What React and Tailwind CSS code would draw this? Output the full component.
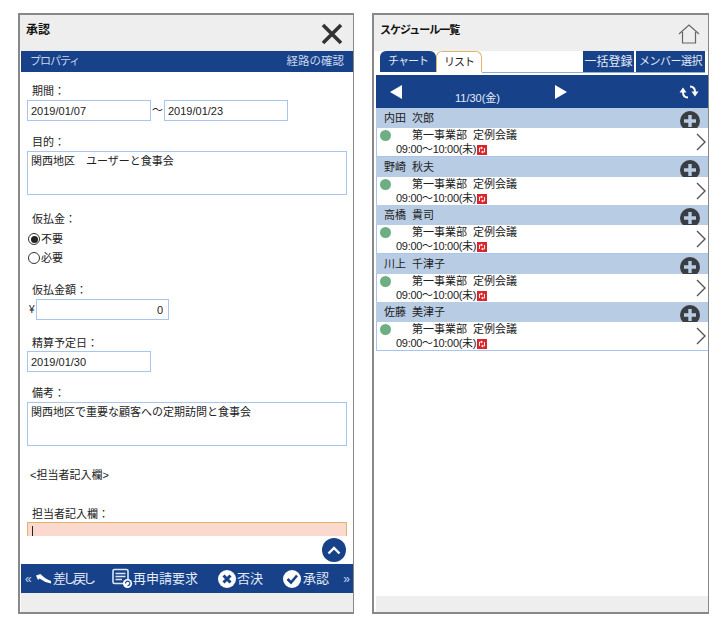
import { Fragment } from "react";

function Label({ children, className = "" }) {
    return <div className={`h-4 leading-4 pl-[5px] text-[11px] text-[#222] ${className}`}>{children}</div>;
}

function Field({ value, className = "" }) {
    return (
        <input
            readOnly
            value={value}
            className={`h-[21px] border border-[#a9c4ee] pl-[3px] pr-1 text-[11px] text-[#222] outline-none ${className}`}
        />
    );
}

function Memo({ value, className = "" }) {
    return (
        <textarea
            readOnly
            value={value}
            className={`block w-[320px] h-[44px] resize-none border border-[#a9c4ee] px-[3px] pt-[2px] leading-[14px] text-[11px] text-[#222] outline-none ${className}`}
        />
    );
}

function Radio({ on, label, className = "" }) {
    return (
        <div className={`flex items-center h-4 ml-[1px] text-[11px] text-[#222] ${className}`}>
            <span className="w-[12px] h-[12px] rounded-full border border-[#333] flex items-center justify-center">
                {on && <span className="w-[7px] h-[7px] rounded-full bg-[#222]" />}
            </span>
            <span className="ml-[1px]">{label}</span>
        </div>
    );
}

function CloseIcon() {
    return (
        <svg width="22" height="22" viewBox="0 0 22 22" className="mr-[10px] mt-[1px]">
            <path d="M2 2 L20 20 M20 2 L2 20" stroke="#333" strokeWidth="3.6" fill="none" />
        </svg>
    );
}

function HomeIcon() {
    return (
        <svg width="22" height="20" viewBox="0 0 22 20" className="mr-[8px] mt-[1px]">
            <path d="M1 10 L11 1 L21 10 M4.5 8 V19 H17.5 V8" stroke="#666" strokeWidth="1.2" fill="none" />
        </svg>
    );
}

function ReturnIcon() {
    return (
        <svg width="17" height="12" viewBox="0 0 17 12" className="flex-none">
            <path d="M1 2.5 L5.5 1 Q10 6 16 8 V10.5 Q9 9 4.5 5.5 L3 7 Z" fill="#fff" />
        </svg>
    );
}

function ResendIcon() {
    return (
        <svg width="21" height="21" viewBox="0 0 21 21" className="flex-none ml-[19px]">
            <rect x="1" y="1.5" width="15" height="14" rx="1.5" stroke="#dbe5f6" strokeWidth="1.6" fill="none" />
            <path d="M3.5 5.5 H13.5 M3.5 8.5 H13.5 M3.5 11.5 H10" stroke="#dbe5f6" strokeWidth="1.5" />
            <circle cx="15.5" cy="15.5" r="4.6" fill="#fff" />
            <path d="M13.5 15.5 A2.2 2.2 0 1 1 15.5 17.6" stroke="#174289" strokeWidth="1.2" fill="none" />
        </svg>
    );
}

function DenyIcon() {
    return (
        <svg width="18" height="18" viewBox="0 0 18 18" className="flex-none ml-[20px]">
            <circle cx="9" cy="9" r="9" fill="#fff" />
            <path d="M5.5 5.5 L12.5 12.5 M12.5 5.5 L5.5 12.5" stroke="#174289" strokeWidth="3" />
        </svg>
    );
}

function ApproveIcon() {
    return (
        <svg width="18" height="18" viewBox="0 0 18 18" className="flex-none ml-[20px]">
            <circle cx="9" cy="9" r="9" fill="#fff" />
            <path d="M4.5 9 L8 12.5 L14 5.5" stroke="#174289" strokeWidth="2.6" fill="none" />
        </svg>
    );
}

function RefreshIcon() {
    return (
        <svg width="20" height="18" viewBox="0 0 20 18" className="mr-[9px]">
            <path d="M11 3.5 Q16 3.5 16 9" stroke="#fff" strokeWidth="2" fill="none" />
            <path d="M12.5 8.5 H19.5 L16 13.5 Z" fill="#fff" />
            <path d="M9 14.5 Q4 14.5 4 9" stroke="#fff" strokeWidth="2" fill="none" />
            <path d="M0.5 9.5 H7.5 L4 4.5 Z" fill="#fff" />
        </svg>
    );
}

function PlusBadge() {
    return (
        <svg width="20" height="20" viewBox="0 0 20 20" className="absolute right-[8px] top-[3px]">
            <circle cx="10" cy="10" r="10" fill="#3a3d42" />
            <path d="M10 4 V16 M4 10 H16" stroke="#b8cce4" strokeWidth="3.4" />
        </svg>
    );
}

function RepeatMark() {
    return (
        <span className="ml-[1px] w-[10px] h-[10px] bg-[#d8262c] flex items-center justify-center mt-[2px]">
            <svg width="8" height="8" viewBox="0 0 8 8">
                <path d="M1.5 6 V2 H4 M6.5 2 V6 H4 M3 1 L4.5 2 L3 3 M5 5 L3.5 6 L5 7" stroke="#fff" strokeWidth="0.9" fill="none" />
            </svg>
        </span>
    );
}

const members = ["内田\u00a0\u00a0次郎", "野崎\u00a0\u00a0秋夫", "高橋\u00a0\u00a0貴司", "川上\u00a0\u00a0千津子", "佐藤\u00a0\u00a0美津子"];

function MemberRow({ name }) {
    return (
        <div className="h-[48.5px] flex flex-col overflow-hidden">
            <div className="relative h-[20px] flex-none overflow-hidden bg-[#b8cce4] pl-[8px] leading-[20px] text-[11px] text-[#222]">
                {name}
                <PlusBadge />
            </div>
            <div className="relative flex-1 border-l border-b-2 border-[#a9c4ee] bg-white pt-px text-[11px] text-[#222]">
                <div className="flex items-center h-[13px]">
                    <span className="ml-[3px] w-[11px] h-[11px] rounded-full bg-[#6fae83]" />
                    <span className="ml-[21px] leading-[13px]">第一事業部&nbsp;&nbsp;定例会議</span>
                </div>
                <div className="flex items-center h-[14px] ml-[19px] leading-[14px] tracking-[-0.3px]">
                    09:00～10:00(未)
                    <RepeatMark />
                </div>
                <svg width="10" height="18" viewBox="0 0 10 18" className="absolute right-[2px] top-[5px]">
                    <path d="M1 1 L9 9 L1 17" stroke="#555" strokeWidth="1.4" fill="none" />
                </svg>
            </div>
        </div>
    );
}

function ApprovalPanel() {
    return (
        <div className="w-[336px] h-[601px] flex flex-col border-2 border-r border-[#888] bg-white pl-px">
            <div className="h-[36px] flex-none flex items-center justify-between bg-[#eeeeee] -ml-px pl-[6px]">
                <span className="text-[12px] font-bold text-[#111] -mt-[6px]">承認</span>
                <CloseIcon />
            </div>
            <div className="h-[21px] flex-none flex items-center justify-between bg-[#174289] px-[9px] text-[11px] text-[#c9d6ee]">
                <span className="tracking-[-1px]">プロパティ</span>
                <span className="text-[11.5px]">経路の確認</span>
            </div>

            <div className="h-[464px] flex-none overflow-hidden pl-[6px]">
                <Label className="mt-[11px]">期間：</Label>
                <div className="flex items-center mt-px">
                    <Field value="2019/01/07" className="w-[124px]" />
                    <span className="w-[13px] text-center text-[11px] text-[#222]">～</span>
                    <Field value="2019/01/23" className="w-[124px]" />
                </div>
                <Label className="mt-[13px]">目的：</Label>
                <Memo value={"関西地区\u3000ユーザーと食事会"} className="mt-px" />
                <Label className="mt-[16px]">仮払金：</Label>
                <Radio on label="不要" className="mt-[4px]" />
                <Radio label="必要" className="mt-[3px]" />
                <Label className="mt-[16px]">仮払金額：</Label>
                <div className="flex items-center mt-px">
                    <span className="w-[9px] pl-[2px] text-[10px] text-[#222]">¥</span>
                    <Field value="0" className="w-[133px] text-right pr-[5px]" />
                </div>
                <Label className="mt-[15px]">精算予定日：</Label>
                <Field value="2019/01/30" className="w-[124px] block" />
                <Label className="mt-[13px]">備考：</Label>
                <Memo value="関西地区で重要な顧客への定期訪問と食事会" className="mt-px" />
                <div className="h-4 leading-4 mt-[21px] pl-[3px] text-[11px] text-[#222]">&lt;担当者記入欄&gt;</div>
                <Label className="mt-[23px]">担当者記入欄：</Label>
                <div className="w-[320px] h-[30px] border border-[#dfb56c] bg-[#fcd9cf] pl-[4px] pt-[3px]">
                    <div className="w-px h-[11px] bg-[#222]" />
                </div>
            </div>

            <div className="h-[28px] flex-none flex justify-end items-center pr-[7px]">
                <button className="w-[24px] h-[24px] rounded-full bg-[#174289] flex items-center justify-center">
                    <svg width="14" height="9" viewBox="0 0 14 9">
                        <path d="M1.5 7.5 L7 2 L12.5 7.5" stroke="#fff" strokeWidth="2.4" fill="none" />
                    </svg>
                </button>
            </div>

            <div className="h-[29px] flex-none flex items-center whitespace-nowrap bg-[#174289] pl-[4px] text-[13px] text-[#e4ebf7]">
                <span className="w-[10px] flex-none text-[12px] text-[#c9d6ee]">«</span>
                <ReturnIcon />
                <span className="ml-px w-[40px] flex-none tracking-[-3px]">差し戻し</span>
                <ResendIcon />
                <span className="w-[65px] flex-none">再申請要求</span>
                <DenyIcon />
                <span className="ml-px w-[26px] flex-none">否決</span>
                <ApproveIcon />
                <span className="ml-[2px] w-[26px] flex-none">承認</span>
                <span className="ml-auto mr-[3px] text-[12px] text-[#c9d6ee]">»</span>
            </div>
            <div className="flex-1 bg-[#eeeeee]" />
        </div>
    );
}

function SchedulePanel() {
    return (
        <div className="w-[337px] h-[601px] flex flex-col border-2 border-r border-[#888] bg-white pl-[2px]">
            <div className="h-[36px] flex-none flex items-center justify-between bg-[#eeeeee] -ml-[2px] pl-[6px]">
                <span className="text-[11px] font-bold tracking-[-1px] text-[#111] -mt-[6px]">スケジュール一覧</span>
                <HomeIcon />
            </div>

            <div className="h-[21px] flex-none flex items-stretch pl-[4px] pr-[3px] text-[11px] whitespace-nowrap">
                <div className="w-[56px] rounded-t-[6px] bg-[#174289] tracking-[-1px] text-[#e4ebf7] flex items-center justify-center">チャート</div>
                <div className="w-[46px] rounded-t-[6px] border-x border-t border-[#dfb56c] bg-white tracking-[-1px] text-[#222] flex items-center justify-center">リスト</div>
                <div className="ml-auto w-[51px] bg-[#174289] text-[12px] text-[#e4ebf7] flex items-center justify-center">一括登録</div>
                <div className="ml-[2px] w-[69px] bg-[#174289] tracking-[-0.5px] text-[#e4ebf7] flex items-center justify-center">メンバー選択</div>
            </div>
            <div className="h-[3px] flex-none">
                <div className="h-px ml-[106px] mr-[3px] bg-[#8fa9d4]" />
            </div>

            <div className="h-[33px] flex-none flex items-center justify-between bg-[#174289]">
                <div className="relative flex-1 flex items-center text-white">
                    <svg width="12" height="14" viewBox="0 0 12 14" className="ml-[14px]"><path d="M12 0 V14 L0 7 Z" fill="#fff" /></svg>
                    <span className="absolute left-[79px] top-[5px] text-[11px] leading-4 text-[#e4ebf7]">11/30(金)</span>
                    <svg width="12" height="14" viewBox="0 0 12 14" className="ml-[153px]"><path d="M0 0 V14 L12 7 Z" fill="#fff" /></svg>
                </div>
                <RefreshIcon />
            </div>

            {members.map((name) => (
                <Fragment key={name}>
                    <MemberRow name={name} />
                </Fragment>
            ))}

            <div className="flex-1" />
            <div className="h-[16px] flex-none bg-[#eeeeee]" />
        </div>
    );
}

export default function App() {
    return (
        <div
            className="w-[726px] h-[630px] bg-white pl-[18px] pt-[13px] flex gap-[18px] overflow-hidden"
            style={{ fontFamily: '"Liberation Sans", "Noto Sans CJK JP", sans-serif' }}
        >
            <ApprovalPanel />
            <SchedulePanel />
        </div>
    );
}
